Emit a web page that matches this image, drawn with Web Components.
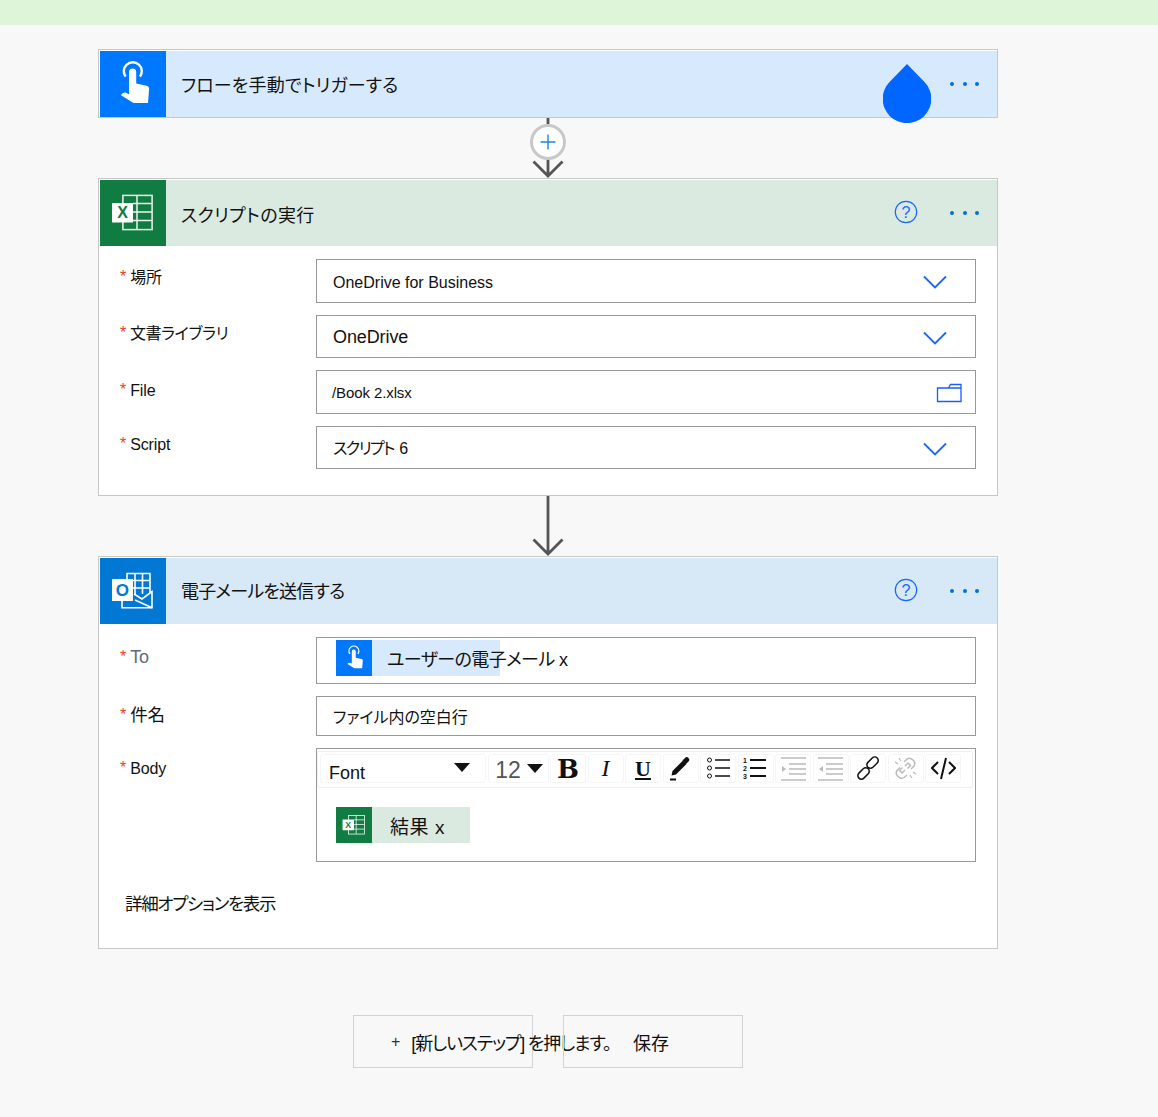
<!DOCTYPE html>
<html lang="ja">
<head>
<meta charset="utf-8">
<title>Flow</title>
<style>
  html, body { margin: 0; background: rgb(248, 248, 248); }
  body { font-family: "Liberation Sans", "Noto Sans CJK JP", sans-serif; font-feature-settings: "palt"; color: rgb(17, 17, 17); }
</style>
</head>
<body>
<template id="touch-icon">
  <svg viewBox="0 0 66 66" width="100%" height="100%">
    <path d="M25.6 25.6a9 9 0 1 1 14.4 0" fill="none" stroke="#fff" stroke-width="2.4"/>
    <path d="M29 21a3.6 3.6 0 0 1 7.2 0v11.5l10.6 2.2q2.4.6 2.3 3.2L48 52H33.5L21 44.2q1.2-3 4.4-2.6l3.6 1.6z" fill="#fff"/>
  </svg>
</template>
<template id="excel-icon">
  <svg viewBox="0 0 66 66" width="100%" height="100%">
    <g fill="none" stroke="#fff" stroke-width="1.5" opacity=".92">
      <rect x="22.900" y="15.400" width="29.200" height="34.200"/>
      <path d="M37 15v34M33 23.500h19M33 32h19M33 40.500h19"/>
    </g>
    <rect x="12" y="23" width="21" height="19.500" rx=".6" fill="#fff"/>
    <text x="22.500" y="38" text-anchor="middle" font-family="Liberation Sans" font-weight="700" font-size="16" fill="#107c41">X</text>
  </svg>
</template>
<template id="outlook-icon">
  <svg viewBox="0 0 66 66" width="100%" height="100%">
    <g fill="none" stroke="#fff" stroke-width="1.600">
      <path d="M27 22v-6.500h23v20"/>
      <path d="M35 16v20M42.500 16v20M27 22.500h23M33 30h17"/>
      <path d="M22 43v6.800h30V33.500L42 41l-8-5"/>
      <path d="M35 42l17 7.800"/>
    </g>
    <rect x="12" y="21" width="21" height="22" rx=".6" fill="#fff"/>
    <text x="22.300" y="38" text-anchor="middle" font-family="Liberation Sans" font-weight="700" font-size="17" fill="#0078d4">O</text>
  </svg>
</template>

<flow-page>
  <flow-card tone="trigger" title="フローを手動でトリガーする" style="--title-spacing:.15px;--title-top:4px" drop></flow-card>
  <flow-connector plus></flow-connector>

  <flow-card tone="excel" title="スクリプトの実行" style="--title-spacing:.35px" help>
    <flow-form style="--pad-bottom:26px">
      <flow-field label="場所" style="--h:44px;--label-top:8px;--nudge-top:2px">OneDrive for Business<span slot="end" data-icon="chevron"></span></flow-field>
      <flow-field label="文書ライブラリ" style="--h:43px;--label-top:8px;--label-spacing:-.35px"><span style="font-size:18px;letter-spacing:-.1px">OneDrive</span><span slot="end" data-icon="chevron"></span></flow-field>
      <flow-field label="File" style="--h:44px;--label-top:10px"><span style="font-size:15px;margin-left:-1px;letter-spacing:-.1px">/Book 2.xlsx</span><span slot="end" data-icon="folder" style="margin-right:-15px"></span></flow-field>
      <flow-field label="Script" style="--h:43px;--label-top:8px;--nudge:4px"><span style="letter-spacing:-1.600px;word-spacing:2.500px">スクリプト 6</span><span slot="end" data-icon="chevron"></span></flow-field>
    </flow-form>
  </flow-card>
  <flow-connector></flow-connector>

  <flow-card tone="outlook" title="電子メールを送信する" style="--title-spacing:-.8px;--title-top:2px" help>
    <flow-form>
      <flow-field label="To" muted style="--h:47px;--label-top:10px;--label-size:18px;--nudge:7px"><div style="margin-left:3px"><token-chip tone="trigger" width="164"><span style="letter-spacing:-.6px;margin-left:-1px">ユーザーの電子メール x</span></token-chip></div></flow-field>
      <flow-field label="件名" style="--h:40px;--label-top:9px;--label-size:17.500px;--nudge:2px">ファイル内の空白行</flow-field>
      <flow-field label="Body" flush style="--h:114px;--label-top:10px">
        <editor-toolbar></editor-toolbar>
        <div style="padding:19px 0 0 19px"><token-chip tone="excel" width="134" style="--lh:42px"><span style="font-size:19px;letter-spacing:.6px;margin-left:2px">結果 x</span></token-chip></div>
      </flow-field>
    </flow-form>
    <div style="padding:30px 0 32px 26px;font-size:17.500px;line-height:24px;letter-spacing:-1.300px">詳細オプションを表示</div>
  </flow-card>

  <flow-actions></flow-actions>
</flow-page>

<script>
const ICONS = {
  chevron: '<svg width="24" height="14" viewBox="0 0 24 14"><path d="M1 1.5l11 11 11-11" fill="none" stroke="#1a66ff" stroke-width="1.8"/></svg>',
  folder: '<svg width="26" height="20" viewBox="0 0 26 20"><path d="M1.500 5h11l2-3.500h10.500v17h-23.500zM12.500 5h12.500" fill="none" stroke="#1a5cff" stroke-width="1.300"/></svg>'
};

const TONES = {
  trigger: { icon: 'touch-icon', solid: 'rgb(0, 119, 255)', soft: 'rgb(215, 233, 253)' },
  excel: { icon: 'excel-icon', solid: 'rgb(16, 124, 65)', soft: 'rgb(219, 234, 224)' },
  outlook: { icon: 'outlook-icon', solid: 'rgb(0, 120, 212)', soft: 'rgb(215, 232, 247)' }
};

function iconFor(tone) {
  return document.getElementById(TONES[tone].icon).content.cloneNode(true);
}

class FlowPage extends HTMLElement {
  constructor() {
    super();
    this.attachShadow({ mode: 'open' }).innerHTML = `
      <style>
        :host { display: block; }
        .band { height: 25px; background: rgb(223, 245, 218); }
        .column { width: 900px; margin-left: 98px; padding: 24px 0 49px; }
      </style>
      <div class="band"></div>
      <div class="column"><slot></slot></div>
    `;
  }
}

class FlowCard extends HTMLElement {
  constructor() {
    super();
    this.attachShadow({ mode: 'open' });
  }

  connectedCallback() {
    const tone = TONES[this.getAttribute('tone')];
    const help = this.hasAttribute('help')
      ? `<svg class="help" width="24" height="24" viewBox="0 0 24 24"><circle cx="12" cy="12" r="10.700" fill="none" stroke="#1a66ff" stroke-width="1.200"/><text x="12" y="18" text-anchor="middle" font-family="Liberation Sans" font-size="16" fill="#1a66ff">?</text></svg>`
      : '';
    const drop = this.hasAttribute('drop')
      ? `<svg class="drop" width="48" height="59" viewBox="0 0 48 59"><path d="M24 0L6.500 18A24.300 24.300 0 1 0 41.500 18z" fill="rgb(0, 102, 255)"/></svg>`
      : '';
    this.shadowRoot.innerHTML = `
      <style>
        :host { display: block; position: relative; background: white; border: 1px solid rgb(200, 200, 200); box-sizing: border-box; padding-top: 1px; }
        header { display: flex; align-items: center; height: 66px; margin-left: 1px; background: ${tone.soft}; }
        .icon { width: 66px; height: 66px; flex: none; background: ${tone.solid}; }
        .title { flex: 1; padding-left: 15px; font-size: 18px; line-height: 24px; margin-top: var(--title-top, 5px); letter-spacing: var(--title-spacing, 0); }
        .help { flex: none; margin: -2px 32px 0 0; }
        .more { flex: none; display: flex; gap: 8.400px; margin: -1px 18px 0 0; }
        .more i { width: 4px; height: 4px; border-radius: 50%; background: rgb(0, 112, 224); }
        .drop { position: absolute; left: 784px; top: 14px; }
      </style>
      <header>
        <div class="icon"></div>
        <div class="title">${this.getAttribute('title')}</div>
        ${help}
        <div class="more"><i></i><i></i><i></i></div>
      </header>
      ${drop}
      <slot></slot>
    `;
    this.shadowRoot.querySelector('.icon').appendChild(iconFor(this.getAttribute('tone')));
  }
}

class FlowConnector extends HTMLElement {
  constructor() {
    super();
    this.attachShadow({ mode: 'open' });
  }

  connectedCallback() {
    const plus = this.hasAttribute('plus')
      ? `<circle cx="20" cy="24" r="16.500" fill="white" stroke="rgb(200, 200, 200)" stroke-width="3"/><path d="M12.500 24h15M20 16.500v15" stroke="rgb(30, 130, 225)" stroke-width="1.400"/>`
      : '';
    this.shadowRoot.innerHTML = `
      <style>
        :host { display: flex; justify-content: center; height: 60px; }
      </style>
      <svg width="40" height="60" viewBox="0 0 40 60">
        <path d="M20 0v57M5.500 43.500L20 58 34.500 43.500" fill="none" stroke="rgb(85, 85, 85)" stroke-width="2.800"/>
        ${plus}
      </svg>
    `;
  }
}

class FlowForm extends HTMLElement {
  constructor() {
    super();
    this.attachShadow({ mode: 'open' }).innerHTML = `
      <style>
        :host { display: flex; flex-direction: column; gap: 12px; padding: 13px 21px var(--pad-bottom, 0) 21px; }
      </style>
      <slot></slot>
    `;
  }
}

class FlowField extends HTMLElement {
  constructor() {
    super();
    this.attachShadow({ mode: 'open' });
  }

  connectedCallback() {
    const flush = this.hasAttribute('flush');
    const labelColor = this.hasAttribute('muted') ? 'rgb(95, 107, 125)' : 'rgb(17, 17, 17)';
    this.shadowRoot.innerHTML = `
      <style>
        :host { display: flex; align-items: flex-start; }
        .label { width: 196px; flex: none; font-size: var(--label-size, 16px); line-height: 20px; padding-top: var(--label-top, 7px); color: ${labelColor}; letter-spacing: var(--label-spacing, -.1px); }
        .star { color: rgb(240, 60, 40); font-size: 16px; margin-right: 4px; vertical-align: 1px; }
        .box { flex: 1; box-sizing: border-box; height: var(--h); border: 1px solid rgb(153, 153, 153); background: white;
               display: ${flush ? 'block' : 'flex'}; align-items: center; justify-content: space-between;
               padding: ${flush ? '2px 2px 0 0' : '2px 28px 0 16px'}; font-size: 16px; }
        .value { padding-top: var(--nudge-top, 0); padding-bottom: var(--nudge, 0); }
        ::slotted([slot="end"]) { display: flex; }
      </style>
      <div class="label"><span class="star">*</span>${this.getAttribute('label')}</div>
      <div class="box">
        <div class="value"><slot></slot></div>
        <slot name="end"></slot>
      </div>
    `;
    this.querySelectorAll('[data-icon]').forEach((el) => {
      el.innerHTML = ICONS[el.dataset.icon];
    });
  }
}

class TokenChip extends HTMLElement {
  constructor() {
    super();
    this.attachShadow({ mode: 'open' });
  }

  connectedCallback() {
    const tone = TONES[this.getAttribute('tone')];
    this.shadowRoot.innerHTML = `
      <style>
        :host { display: flex; height: 36px; width: ${this.getAttribute('width')}px; background: ${tone.soft}; }
        .icon { width: 36px; height: 36px; flex: none; background: ${tone.solid}; }
        .text { padding-left: 16px; font-size: 18px; line-height: var(--lh, 40px); white-space: nowrap; }
      </style>
      <div class="icon"></div>
      <div class="text"><slot></slot></div>
    `;
    this.shadowRoot.querySelector('.icon').appendChild(iconFor(this.getAttribute('tone')));
  }
}

const TOOL_ICONS = {
  pen: '<path d="M3.500 19.500l1-4.500L15 4.500l3.500 3.500L8 18.500z" fill="#111"/><path d="M14.500 4.500l3-3q1.500-1 3 .500t.500 3l-3 3z" fill="#111"/><path d="M2 23.500h6" stroke="#111" stroke-width="2"/>',
  ul: '<g fill="none" stroke="#111"><circle cx="3.500" cy="4" r="2"/><circle cx="3.500" cy="12" r="2"/><circle cx="3.500" cy="20" r="2"/><path d="M9 4h15M9 12h15M9 20h15" stroke-width="1.400"/></g>',
  ol: '<g fill="#111" font-family="Liberation Sans" font-weight="700" font-size="7"><text x="0" y="7">1</text><text x="0" y="15">2</text><text x="0" y="23">3</text></g><path d="M7 4h16M7 12h16M7 20h16" stroke="#111" stroke-width="2"/>',
  indent: '<path d="M0 2h25M8 8h17M8 13h17M8 18h17M0 24h25" stroke="#bbb" stroke-width="1.500"/><path d="M1 10l4 3-4 3z" fill="#bbb"/>',
  outdent: '<path d="M0 2h25M8 8h17M8 13h17M8 18h17M0 24h25" stroke="#bbb" stroke-width="1.500"/><path d="M5 10l-4 3 4 3z" fill="#bbb"/>',
  link: '<g fill="none" stroke="#111" stroke-width="1.700" transform="translate(1.500 1.500) scale(.88)"><rect x="-4.500" y="-4" width="15" height="8" rx="4" transform="translate(15 8) rotate(-45)"/><rect x="-10.500" y="-4" width="15" height="8" rx="4" transform="translate(9 16) rotate(-45)"/></g>',
  unlink: '<g fill="none" stroke="#bbb" stroke-width="1.500"><path d="M11 6l3-3q3-2 6 1t1 6l-3 3"/><path d="M14 19l-3 2.500q-3 2-6-1t-1-6l3-3"/><path d="M12 10l3-3 2.500 2.500-3 3M12 14l-3 3-2.500-2.500 3-3"/><path d="M6 2l2 3M2 6l3 2M19 22l-2-3M23 18l-3-2" stroke-width="1.200"/></g>',
  code: '<path d="M7 6l-6 6 6 6M18 6l6 6-6 6M15 2l-5 21" fill="none" stroke="#111" stroke-width="2"/>'
};

class EditorToolbar extends HTMLElement {
  constructor() {
    super();
    this.attachShadow({ mode: 'open' });
    const svgBtn = (name) =>
      `<div class="btn"><svg width="25" height="25" viewBox="0 0 25 25">${TOOL_ICONS[name]}</svg></div>`;
    this.shadowRoot.innerHTML = `
      <style>
        :host { display: flex; gap: 1.500px; height: 37px; box-sizing: border-box; border: 1px solid rgb(240, 240, 240); padding: 2px; border-radius: 2px; color: rgb(17, 17, 17); }
        .btn { width: 34px; height: 27px; border: 1px solid rgb(246, 246, 246); border-radius: 3px; display: flex; align-items: center; justify-content: center; flex: none; }
        .font { width: 164px; justify-content: space-between; font-size: 18px; }
        .font span { padding: 9px 0 0 8px; }
        .size { width: 59px; font-size: 23px; color: rgb(85, 85, 85); gap: 6px; }
        .size span { padding: 4px 0 0 2px; }
        .caret { width: 0; height: 0; border-left: 8px solid transparent; border-right: 8px solid transparent; border-top: 9px solid rgb(17, 17, 17); }
        .font .caret { margin-right: 15px; margin-top: -3px; }
        .b { font: 700 26px "DejaVu Serif", serif; }
        .i { font: italic 24px "Liberation Serif", serif; }
        .u { font: 700 22px "Liberation Serif", serif; text-decoration: underline; }
      </style>
      <div class="btn font"><span>Font</span><i class="caret"></i></div>
      <div class="btn size"><span>12</span><i class="caret"></i></div>
      <div class="btn b">B</div>
      <div class="btn i">I</div>
      <div class="btn u">U</div>
      ${['pen', 'ul', 'ol', 'indent', 'outdent', 'link', 'unlink', 'code'].map(svgBtn).join('')}
    `;
  }
}

class FlowActions extends HTMLElement {
  constructor() {
    super();
    this.attachShadow({ mode: 'open' }).innerHTML = `
      <style>
        :host { display: flex; justify-content: center; gap: 30px; margin-top: 66px; }
        .action { width: 180px; height: 53px; box-sizing: border-box; border: 1px solid rgb(210, 210, 210); font-size: 18px; display: flex; align-items: center; white-space: nowrap; }
        .new { padding-left: 37px; }
        .new b { font-weight: 400; font-size: 16px; margin-right: 11px; color: rgb(70, 40, 40); }
        .new span { letter-spacing: -1.200px; }
        .save { padding-left: 69px; }
      </style>
      <div class="action new"><b>+</b><span>[新しいステップ] を押します。</span></div>
      <div class="action save">保存</div>
    `;
  }
}

customElements.define('flow-page', FlowPage);
customElements.define('flow-card', FlowCard);
customElements.define('flow-connector', FlowConnector);
customElements.define('flow-form', FlowForm);
customElements.define('flow-field', FlowField);
customElements.define('token-chip', TokenChip);
customElements.define('editor-toolbar', EditorToolbar);
customElements.define('flow-actions', FlowActions);
</script>
</body>
</html>
